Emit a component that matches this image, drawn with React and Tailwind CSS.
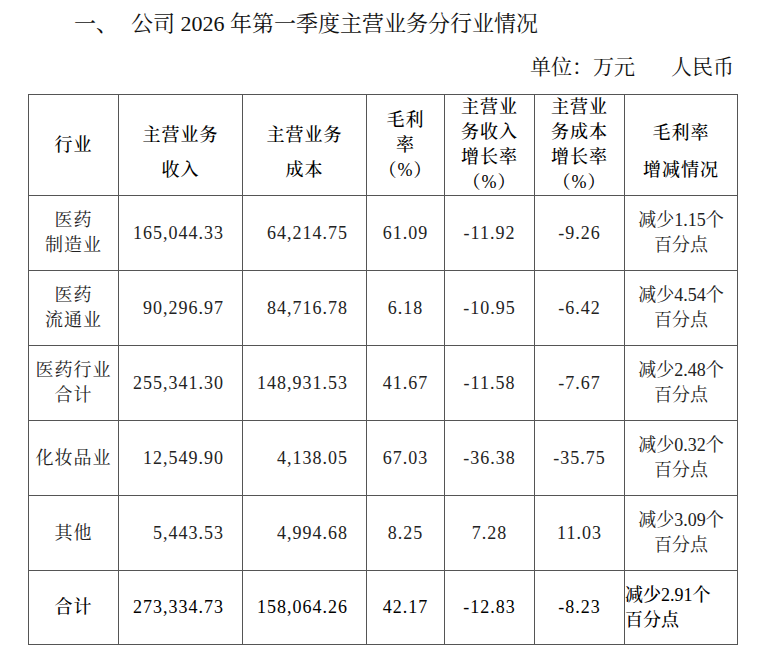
const FONT = { fontFamily: '"Liberation Serif", "Noto Serif CJK SC", "Noto Sans CJK SC", serif' }

const rows = [
  { name: ['医药', '制造业'], rev: '165,044.33', cost: '64,214.75', gm: '61.09', revG: '-11.92', costG: '-9.26', chg: '1.15' },
  { name: ['医药', '流通业'], rev: '90,296.97', cost: '84,716.78', gm: '6.18', revG: '-10.95', costG: '-6.42', chg: '4.54' },
  { name: ['医药行业', '合计'], rev: '255,341.30', cost: '148,931.53', gm: '41.67', revG: '-11.58', costG: '-7.67', chg: '2.48' },
  { name: ['化妆品业'], rev: '12,549.90', cost: '4,138.05', gm: '67.03', revG: '-36.38', costG: '-35.75', chg: '0.32' },
  { name: ['其他'], rev: '5,443.53', cost: '4,994.68', gm: '8.25', revG: '7.28', costG: '11.03', chg: '3.09' },
]

const cell = 'border border-[#555] align-middle p-0'

function Lines({ items, className = '' }) {
  return (
    <div className={className}>
      {items.map((t, i) => <div key={i}>{t}</div>)}
    </div>
  )
}

export default function App() {
  return (
    <div className="w-[777px] h-[662px] bg-white text-[#222]" style={FONT}>
      <div className="flex items-center pt-[10px] h-[38px] text-[22px] leading-[28px] text-[#111]">
        <span className="pl-[74px] w-[131px]">一、</span>
        <span>公司 2026 年第一季度主营业务分行业情况</span>
      </div>
      <div className="flex justify-end pr-[43px] mt-[15px] text-[21px] leading-[28px] text-[#111]">
        <span>单位：万元</span>
        <span className="ml-[36px]">人民币</span>
      </div>
      <table className="ml-[28px] mt-[13px] border-collapse table-fixed w-[709px] text-[18px] leading-[25px] tracking-[1px]">
        <colgroup>
          <col className="w-[90px]" />
          <col className="w-[124px]" />
          <col className="w-[124px]" />
          <col className="w-[78px]" />
          <col className="w-[90px]" />
          <col className="w-[90px]" />
          <col className="w-[113px]" />
        </colgroup>
        <thead>
          <tr className="h-[100px] text-center text-black">
            <th className={cell + ' font-medium'}>行业</th>
            <th className={cell + ' font-medium'}>
              <Lines items={['主营业务', '收入']} className="pt-[16px] flex flex-col gap-[10px]" />
            </th>
            <th className={cell + ' font-medium'}>
              <Lines items={['主营业务', '成本']} className="pt-[16px] flex flex-col gap-[10px]" />
            </th>
            <th className={cell + ' font-medium'}>
              <Lines items={['毛利', '率', '（%）']} />
            </th>
            <th className={cell + ' font-medium'}>
              <Lines items={['主营业', '务收入', '增长率', '（%）']} />
            </th>
            <th className={cell + ' font-medium'}>
              <Lines items={['主营业', '务成本', '增长率', '（%）']} />
            </th>
            <th className={cell + ' font-medium'}>
              <Lines items={['毛利率', '增减情况']} className="pt-[14px] flex flex-col gap-[12px]" />
            </th>
          </tr>
        </thead>
        <tbody>
          {rows.map((r) => (
            <tr key={r.rev} className="h-[75px]">
              <td className={cell + ' text-center'}><Lines items={r.name} /></td>
              <td className={cell + ' text-right pr-[18px]'}>{r.rev}</td>
              <td className={cell + ' text-right pr-[18px]'}>{r.cost}</td>
              <td className={cell + ' text-center'}>{r.gm}</td>
              <td className={cell + ' text-center'}>{r.revG}</td>
              <td className={cell + ' text-center'}>{r.costG}</td>
              <td className={cell + ' text-center tracking-normal'}>
                <Lines items={[`减少${r.chg}个`, '百分点']} />
              </td>
            </tr>
          ))}
          <tr className="h-[74px] text-black">
            <td className={cell + ' text-center font-medium'}>合计</td>
            <td className={cell + ' text-right pr-[18px]'}>273,334.73</td>
            <td className={cell + ' text-right pr-[18px]'}>158,064.26</td>
            <td className={cell + ' text-center'}>42.17</td>
            <td className={cell + ' text-center'}>-12.83</td>
            <td className={cell + ' text-center'}>-8.23</td>
            <td className={cell + ' text-left tracking-normal font-medium'}>
              <Lines items={['减少2.91个', '百分点']} />
            </td>
          </tr>
        </tbody>
      </table>
    </div>
  )
}
